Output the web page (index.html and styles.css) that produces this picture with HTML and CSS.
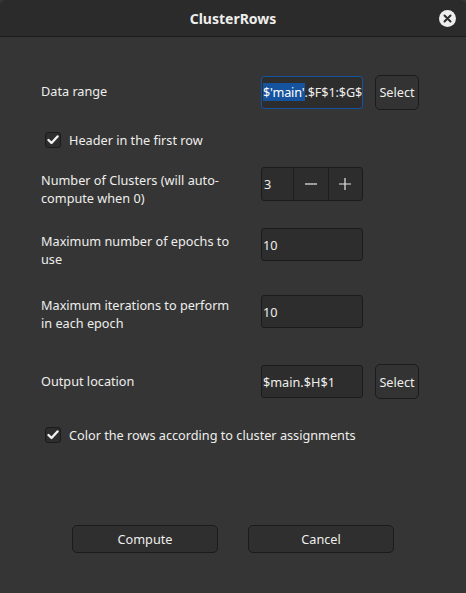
FILE: index.html
```html
<!DOCTYPE html>
<html>
<head>
<meta charset="utf-8">
<link rel="stylesheet" href="styles.css">
</head>
<body>
<div class="window">
  <header class="titlebar">
    <span class="title">ClusterRows</span>
    <span class="close">
      <svg width="17" height="17" viewBox="0 0 17 17"><circle cx="8.5" cy="8.5" r="8.5" fill="#eeeeee"/><path d="M5.5 5.5 L11.5 11.5 M11.5 5.5 L5.5 11.5" stroke="#2b2b2b" stroke-width="2" stroke-linecap="round"/></svg>
    </span>
  </header>
  <main class="content">
    <div class="row row-range">
      <div class="label">Data range</div>
      <div class="field">
        <div class="entry focused"><span class="sel">$'main'</span>.$F$1:$G$</div>
        <button class="select">Select</button>
      </div>
    </div>
    <div class="check-row row-header">
      <span class="box"><svg width="12" height="10" viewBox="0 0 12 10"><path d="M1.5 5 L4.5 8 L10.5 1.5" fill="none" stroke="#f2f2f2" stroke-width="2.4" stroke-linecap="round" stroke-linejoin="round"/></svg></span>
      <span>Header in the first row</span>
    </div>
    <div class="row row-clusters">
      <div class="label lw-clusters">Number of Clusters (will auto-compute when 0)</div>
      <div class="field">
        <div class="spin">
          <span class="spin-val">3</span>
          <span class="spin-btn"><svg width="14" height="14" viewBox="0 0 14 14"><path d="M1 7 H13" stroke="#e8e8e8" stroke-width="1.2"/></svg></span>
          <span class="spin-btn"><svg width="14" height="14" viewBox="0 0 14 14"><path d="M1 7 H13 M7 1 V13" stroke="#e8e8e8" stroke-width="1.2"/></svg></span>
        </div>
      </div>
    </div>
    <div class="row row-epochs">
      <div class="label lw-epochs">Maximum number of epochs to use</div>
      <div class="field"><div class="entry">10</div></div>
    </div>
    <div class="row row-iter">
      <div class="label lw-iter">Maximum iterations to perform in each epoch</div>
      <div class="field"><div class="entry">10</div></div>
    </div>
    <div class="row row-output">
      <div class="label">Output location</div>
      <div class="field">
        <div class="entry">$main.$H$1</div>
        <button class="select">Select</button>
      </div>
    </div>
    <div class="check-row row-color">
      <span class="box"><svg width="12" height="10" viewBox="0 0 12 10"><path d="M1.5 5 L4.5 8 L10.5 1.5" fill="none" stroke="#f2f2f2" stroke-width="2.4" stroke-linecap="round" stroke-linejoin="round"/></svg></span>
      <span>Color the rows according to cluster assignments</span>
    </div>
    <div class="actions">
      <button class="action">Compute</button>
      <button class="action">Cancel</button>
    </div>
  </main>
</div>
</body>
</html>
```
FILE: styles.css
```css
* { box-sizing: border-box; }
html, body {
  margin: 0;
  padding: 0;
  background: #353535;
  height: 100%;
}
body {
  font-family: "Noto Sans", "DejaVu Sans", sans-serif;
  font-size: 12.7px;
  color: #eeeeec;
}
.window {
  width: 466px;
  height: 593px;
  background: #353535;
  overflow: hidden;
}
.titlebar {
  height: 37px;
  background: #2b2b2b;
  border-bottom: 1px solid #1b1b1b;
  border-radius: 6px 6px 0 0;
  display: flex;
  align-items: center;
  justify-content: center;
  position: relative;
}
.title {
  font-weight: bold;
  font-size: 14px;
  color: #eeeeec;
}
.close {
  position: absolute;
  right: 10px;
  top: 10px;
  width: 17px;
  height: 17px;
  display: flex;
}
.content {
  padding-left: 41px;
}
.row {
  display: flex;
  align-items: center;
}
.label {
  width: 220px;
  line-height: 17.5px;
}
.lw-clusters { width: 220px; }
.lw-epochs { width: 220px; padding-right: 14px; }
.lw-iter { width: 220px; padding-right: 24px; }
.field {
  display: flex;
  align-items: center;
  gap: 12px;
}
.entry {
  width: 102px;
  height: 33px;
  background: #2d2d2d;
  border: 1px solid #1b1b1b;
  border-radius: 3px;
  display: flex;
  align-items: center;
  padding-left: 1px;
  white-space: nowrap;
  overflow: hidden;
  color: #eeeeec;
}
.entry.focused {
  border-color: #15539e;
  letter-spacing: -0.15px;
}
.sel {
  background: #15539e;
  color: #ffffff;
  line-height: 18px;
}
.select {
  font-family: inherit;
  font-size: 12.7px;
  color: #eeeeec;
  background: #333333;
  border: 1px solid #1b1b1b;
  border-radius: 5px;
  width: 44px;
  height: 35px;
  padding: 0;
}
.row-range { margin-top: 37px; height: 36px; }
.check-row {
  display: flex;
  align-items: center;
  height: 20px;
  padding-left: 4px;
}
.box {
  width: 16px;
  height: 16px;
  border-radius: 3px;
  background: #2d2d2d;
  border: 1px solid #1b1b1b;
  display: flex;
  align-items: center;
  justify-content: center;
  margin-right: 8px;
}
.row-header { margin-top: 20px; }
.row-clusters { margin-top: 17px; align-items: flex-start; }
.row-clusters .label { padding-top: 5px; }
.spin {
  width: 102px;
  height: 34px;
  display: flex;
  background: #2d2d2d;
  border: 1px solid #1b1b1b;
  border-radius: 3px;
}
.spin-val {
  width: 31px;
  display: flex;
  align-items: center;
  padding-left: 2px;
}
.spin-btn {
  flex: 1;
  border-left: 1px solid #1f1f1f;
  display: flex;
  align-items: center;
  justify-content: center;
}
.row-epochs { margin-top: 21px; align-items: flex-start; }
.row-epochs .label { padding-top: 5px; }
.row-iter { margin-top: 27px; align-items: flex-start; }
.row-iter .label { padding-top: 2px; }
.row-output { margin-top: 32px; height: 35px; }
.row-color { margin-top: 26px; }
.actions {
  margin-top: 80px;
  margin-left: 31px;
  display: flex;
  gap: 30px;
}
.action {
  font-family: inherit;
  font-size: 12.7px;
  color: #eeeeec;
  width: 146px;
  height: 28px;
  background: #2f2f2f;
  border: 1px solid #1b1b1b;
  border-radius: 5px;
  padding: 0;
}
```
